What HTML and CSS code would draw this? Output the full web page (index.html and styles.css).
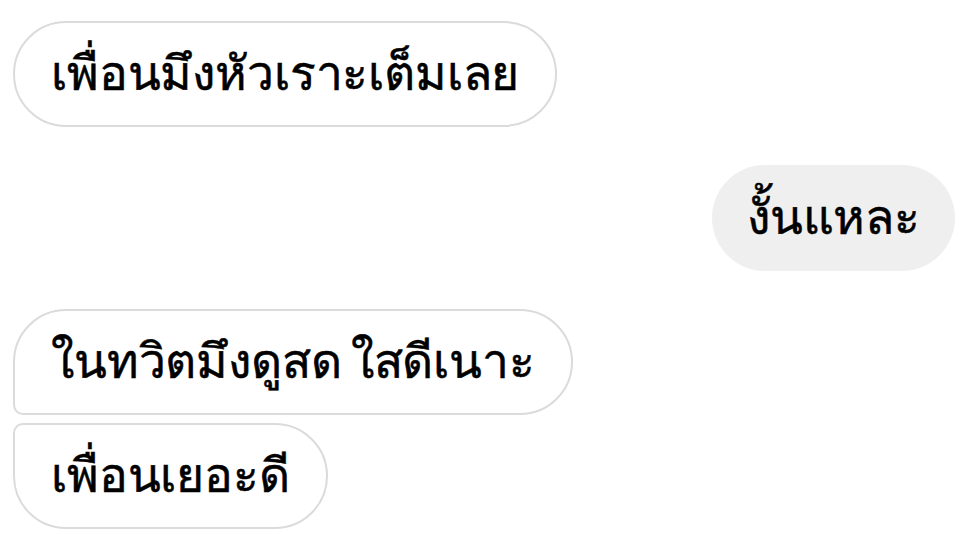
FILE: index.html
```html
<!DOCTYPE html>
<html lang="th">
<head>
<meta charset="utf-8">
<link rel="stylesheet" href="styles.css">
</head>
<body>
<div class="chat">
  <div class="row row-in gap-big">
    <div class="bubble in">เพื่อนมึงหัวเราะเต็มเลย</div>
  </div>
  <div class="row row-out gap-big">
    <div class="bubble out">งั้นแหละ</div>
  </div>
  <div class="row row-in gap-small">
    <div class="bubble in first tight">ในทวิตมึงดูสด ใสดีเนาะ</div>
  </div>
  <div class="row row-in">
    <div class="bubble in last">เพื่อนเยอะดี</div>
  </div>
</div>
</body>
</html>
```
FILE: styles.css
```css
html, body {
  margin: 0;
  padding: 0;
  background: #ffffff;
}
.chat {
  display: flex;
  flex-direction: column;
  padding: 21px 14px 0 13px;
}
.row {
  display: flex;
}
.row-in { justify-content: flex-start; }
.row-out { justify-content: flex-end; }
.gap-big { margin-bottom: 38px; }
.gap-small { margin-bottom: 8px; }
.bubble {
  box-sizing: border-box;
  height: 106px;
  display: flex;
  align-items: center;
  padding: 0 36px 2px;
  border-radius: 53px;
  font-family: "Liberation Sans", sans-serif;
  font-size: 48px;
  font-weight: 400;
  -webkit-text-stroke: 0.5px #000;
  letter-spacing: -0.15px;
  color: #000;
  white-space: nowrap;
}
.tight {
  word-spacing: -4px;
}
.in {
  border: 2px solid #dbdbdb;
  background: #fff;
}
.out {
  background: #efefef;
  padding: 0 35px 2px;
}
.first {
  border-bottom-left-radius: 10px;
}
.last {
  border-top-left-radius: 10px;
}
```
